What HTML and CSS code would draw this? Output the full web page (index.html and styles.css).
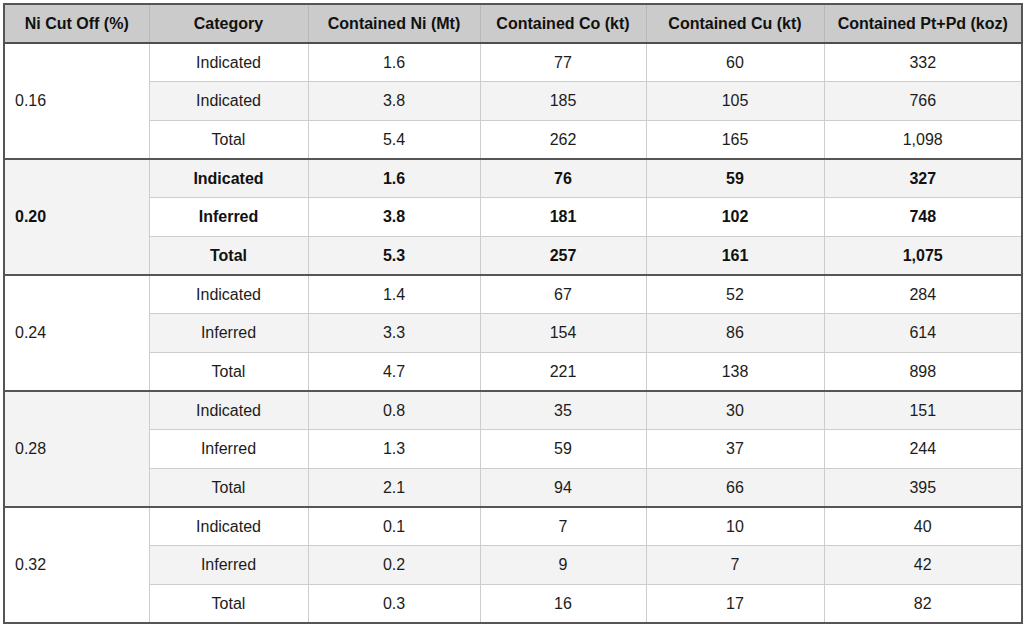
FILE: index.html
```html
<!DOCTYPE html>
<html>
<head>
<meta charset="utf-8">
<link rel="stylesheet" href="styles.css">
</head>
<body>
<table class="grid">
  <colgroup>
    <col class="c1"><col class="c2"><col class="c3"><col class="c4"><col class="c5"><col class="c6">
  </colgroup>
  <thead>
    <tr>
      <th>Ni Cut Off (%)</th>
      <th>Category</th>
      <th>Contained Ni (Mt)</th>
      <th>Contained Co (kt)</th>
      <th>Contained Cu (kt)</th>
      <th>Contained Pt+Pd (koz)</th>
    </tr>
  </thead>
  <tbody class="grp">
    <tr><td class="cut" rowspan="3">0.16</td><td>Indicated</td><td>1.6</td><td>77</td><td>60</td><td>332</td></tr>
    <tr class="alt"><td>Indicated</td><td>3.8</td><td>185</td><td>105</td><td>766</td></tr>
    <tr><td>Total</td><td>5.4</td><td>262</td><td>165</td><td>1,098</td></tr>
  </tbody>
  <tbody class="grp grey bold">
    <tr class="alt"><td class="cut" rowspan="3">0.20</td><td>Indicated</td><td>1.6</td><td>76</td><td>59</td><td>327</td></tr>
    <tr><td>Inferred</td><td>3.8</td><td>181</td><td>102</td><td>748</td></tr>
    <tr class="alt"><td>Total</td><td>5.3</td><td>257</td><td>161</td><td>1,075</td></tr>
  </tbody>
  <tbody class="grp">
    <tr><td class="cut" rowspan="3">0.24</td><td>Indicated</td><td>1.4</td><td>67</td><td>52</td><td>284</td></tr>
    <tr class="alt"><td>Inferred</td><td>3.3</td><td>154</td><td>86</td><td>614</td></tr>
    <tr><td>Total</td><td>4.7</td><td>221</td><td>138</td><td>898</td></tr>
  </tbody>
  <tbody class="grp grey">
    <tr class="alt"><td class="cut" rowspan="3">0.28</td><td>Indicated</td><td>0.8</td><td>35</td><td>30</td><td>151</td></tr>
    <tr><td>Inferred</td><td>1.3</td><td>59</td><td>37</td><td>244</td></tr>
    <tr class="alt"><td>Total</td><td>2.1</td><td>94</td><td>66</td><td>395</td></tr>
  </tbody>
  <tbody class="grp">
    <tr><td class="cut" rowspan="3">0.32</td><td>Indicated</td><td>0.1</td><td>7</td><td>10</td><td>40</td></tr>
    <tr class="alt"><td>Inferred</td><td>0.2</td><td>9</td><td>7</td><td>42</td></tr>
    <tr><td>Total</td><td>0.3</td><td>16</td><td>17</td><td>82</td></tr>
  </tbody>
</table>
</body>
</html>
```

FILE: styles.css
```css
html, body {
  margin: 0;
  padding: 0;
  background: #ffffff;
}
body {
  padding: 3px 0 0 3px;
  font-family: "Liberation Sans", Arial, sans-serif;
  color: #1c1c1c;
}
.grid {
  border-collapse: collapse;
  table-layout: fixed;
  width: 1019px;
  border: 2px solid #555555;
  font-size: 16px;
}
.c1 { width: 145px; }
.c2 { width: 159px; }
.c3 { width: 172px; }
.c4 { width: 166px; }
.c5 { width: 178px; }
.c6 { width: 198px; }

.grid th {
  background: #cbcbcb;
  font-weight: bold;
  height: 37px;
  padding: 0;
  text-align: center;
  border-left: 1px solid #b8b8b8;
  border-bottom: 2px solid #4f4f4f;
  color: #111;
}
.grid td {
  height: 37px;
  padding: 0;
  text-align: center;
  border: 1px solid #cdcdcd;
  background: #ffffff;
}
.grid tbody tr:nth-child(2) td {
  height: 38px;
}
.grid tr.alt td {
  background: #f3f3f3;
}
.grid td.cut {
  text-align: left;
  padding-left: 10px;
  background: #ffffff;
}
.grid tbody.grey td.cut {
  background: #f3f3f3;
}
.grid tbody.grp {
  border-top: 2px solid #555555;
}
.grid tbody.bold td {
  font-weight: bold;
  color: #111;
}
```
